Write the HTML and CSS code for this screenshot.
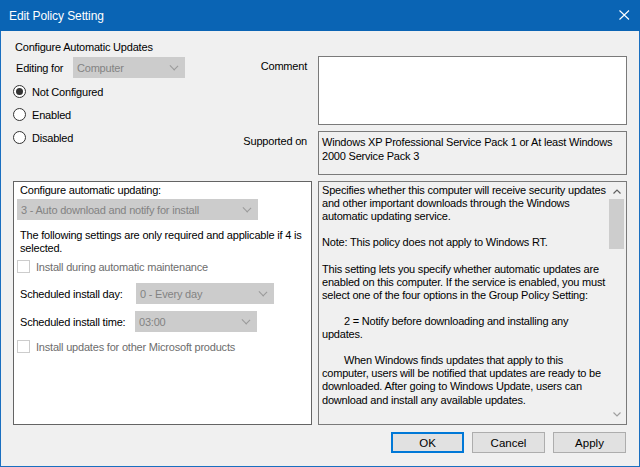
FILE: index.html
```html
<!DOCTYPE html>
<html>
<head>
<meta charset="utf-8">
<link rel="stylesheet" href="styles.css">
</head>
<body>
<div class="window">
  <div class="titlebar">
    <span class="title">Edit Policy Setting</span>
    <svg class="close" width="11" height="10" viewBox="0 0 11 10"><path d="M0.5 0.5 L10 9.5 M10 0.5 L0.5 9.5" stroke="#fff" stroke-width="1.1" fill="none"/></svg>
  </div>
  <div class="body">
    <div class="top">
      <div class="topleft">
        <div class="heading">Configure Automatic Updates</div>
        <div class="editing">
          <span class="editlabel">Editing for</span>
          <div class="combo combo-edit"><span>Computer</span><i class="chev"></i></div>
        </div>
        <div class="radios">
          <label class="radio"><span class="circle checked"></span>Not Configured</label>
          <label class="radio"><span class="circle"></span>Enabled</label>
          <label class="radio"><span class="circle"></span>Disabled</label>
        </div>
      </div>
      <div class="topright">
        <div class="flabel flabel-comment">Comment</div>
        <div class="box comment"></div>
        <div class="flabel flabel-supported">Supported on</div>
        <div class="box supported">Windows XP Professional Service Pack 1 or At least Windows 2000 Service Pack 3</div>
      </div>
    </div>
    <div class="panels">
      <div class="options">
        <div class="optlabel">Configure automatic updating:</div>
        <div class="combo combo-mode"><span>3 - Auto download and notify for install</span><i class="chev"></i></div>
        <div class="note">The following settings are only required and applicable if 4 is selected.</div>
        <label class="check check1"><span class="cbox"></span>Install during automatic maintenance</label>
        <div class="sched sched-day">
          <span class="schedlabel">Scheduled install day:</span>
          <div class="combo combo-day"><span>0 - Every day</span><i class="chev"></i></div>
        </div>
        <div class="sched sched-time">
          <span class="schedlabel">Scheduled install time:</span>
          <div class="combo combo-time"><span>03:00</span><i class="chev"></i></div>
        </div>
        <label class="check check2"><span class="cbox"></span>Install updates for other Microsoft products</label>
      </div>
      <div class="help">
        <div class="helptext">
          <p>Specifies whether this computer will receive security updates and other important downloads through the Windows automatic updating service.</p>
          <p>Note: This policy does not apply to Windows RT.</p>
          <p>This setting lets you specify whether automatic updates are enabled on this computer. If the service is enabled, you must select one of the four options in the Group Policy Setting:</p>
          <p><span class="tab"></span>2 = Notify before downloading and installing any updates.</p>
          <p><span class="tab"></span>When Windows finds updates that apply to this computer, users will be notified that updates are ready to be downloaded. After going to Windows Update, users can download and install any available updates.</p>
        </div>
        <div class="scrollbar">
          <svg class="arrow" width="8" height="5" viewBox="0 0 8 5"><path d="M0.5 4.5 L4 1 L7.5 4.5" stroke="#606060" stroke-width="1.2" fill="none"/></svg>
          <div class="track"><div class="thumb"></div></div>
          <svg class="arrow" width="8" height="5" viewBox="0 0 8 5"><path d="M0.5 0.5 L4 4 L7.5 0.5" stroke="#a0a0a0" stroke-width="1.2" fill="none"/></svg>
        </div>
      </div>
    </div>
    <div class="buttons">
      <button class="btn default">OK</button>
      <button class="btn">Cancel</button>
      <button class="btn">Apply</button>
    </div>
  </div>
</div>
</body>
</html>
```
FILE: styles.css
```css
* { box-sizing: border-box; }
html, body { margin: 0; padding: 0; }
body {
  width: 640px;
  height: 467px;
  font-family: "Liberation Sans", Arial, sans-serif;
  font-size: 11px;
  letter-spacing: -0.2px;
  color: #000;
  background: #f0f0f0;
  overflow: hidden;
}
.window {
  width: 640px;
  height: 467px;
  display: flex;
  flex-direction: column;
}
.titlebar {
  height: 31px;
  background: #0a64b4;
  color: #fff;
  display: flex;
  align-items: center;
  justify-content: space-between;
  padding: 0 10px 0 9px;
  flex: none;
}
.title { font-size: 12px; letter-spacing: -0.1px; }
.close { display: block; margin-top: -1px; }
.body {
  flex: 1;
  border: 1px solid #1a6fc0;
  border-top: none;
  background: #f0f0f0;
  padding: 0 12px 0 12px;
  display: flex;
  flex-direction: column;
}
.top {
  height: 150px;
  display: flex;
  flex: none;
}
.topleft {
  width: 220px;
  display: flex;
  flex-direction: column;
}
.heading {
  margin-top: 9px;
  margin-left: 2px;
  line-height: 14px;
  height: 14px;
}
.editing {
  margin-top: 3px;
  display: flex;
  align-items: center;
  height: 21px;
  margin-left: 3px;
}
.editlabel { width: 57px; }
.combo {
  height: 21px;
  background: #cccccc;
  border: 1px solid #cccccc;
  color: #838383;
  display: flex;
  align-items: center;
  justify-content: space-between;
  padding: 0 7px 0 3px;
}
.combo-edit { width: 112px; }
.chev {
  width: 6px;
  height: 6px;
  border-right: 1px solid #9a9a9a;
  border-bottom: 1px solid #9a9a9a;
  transform: rotate(45deg) scaleX(1.1);
  margin-top: -4px;
}
.radios {
  margin-top: 2px;
  display: flex;
  flex-direction: column;
}
.radio {
  height: 23px;
  display: flex;
  align-items: center;
  gap: 6px;
}
.circle {
  width: 13px;
  height: 13px;
  border-radius: 50%;
  border: 1px solid #333;
  background: #fff;
  display: flex;
  align-items: center;
  justify-content: center;
}
.circle.checked::after {
  content: "";
  width: 7px;
  height: 7px;
  border-radius: 50%;
  background: #333;
}
.topright {
  flex: 1;
  display: grid;
  grid-template-columns: 1fr 309px;
  grid-template-rows: 69px 44px;
  column-gap: 11px;
  row-gap: 6px;
  margin-top: 25px;
  align-content: start;
}
.flabel {
  text-align: right;
  padding-top: 4px;
}
.box {
  border: 1px solid #7a7a7a;
}
.comment { background: #fff; }
.supported {
  background: #f0f0f0;
  padding: 3px 3px 0 3px;
  line-height: 14px;
}
.panels {
  height: 244px;
  display: flex;
  gap: 6px;
  flex: none;
}
.options {
  width: 299px;
  background: #fff;
  border: 1px solid #646464;
  padding: 1px 0 0 3px;
  display: flex;
  flex-direction: column;
}
.optlabel {
  line-height: 14px;
  padding-left: 3px;
}
.combo-mode { width: 241px; margin-top: 2px; }
.note {
  margin-top: 9px;
  line-height: 13px;
  padding-left: 3px;
  padding-right: 4px;
}
.check {
  display: flex;
  align-items: center;
  gap: 6px;
  color: #6d6d6d;
  height: 13px;
}
.check1 { margin-top: 5px; }
.check2 { margin-top: 8px; }
.cbox {
  width: 13px;
  height: 13px;
  border: 1px solid #cccccc;
  background: #fff;
  flex: none;
}
.sched {
  display: flex;
  align-items: center;
  height: 21px;
}
.sched-day { margin-top: 10px; }
.sched-time { margin-top: 7px; }
.schedlabel { padding-left: 3px; }
.sched-day .schedlabel { width: 119px; }
.sched-time .schedlabel { width: 118px; }
.combo-day { width: 138px; }
.combo-time { width: 122px; }
.help {
  width: 309px;
  background: #f0f0f0;
  border: 1px solid #7a7a7a;
  display: flex;
}
.helptext {
  flex: 1;
  padding: 2px 0 0 3px;
  line-height: 13.1px;
  overflow: hidden;
}
.helptext p { margin: 0 0 13.1px 0; }
.tab { display: inline-block; width: 22px; }
.scrollbar {
  width: 17px;
  margin-right: 1px;
  display: flex;
  flex-direction: column;
  align-items: center;
}
.arrow { display: block; margin: 7px 0 5px; }
.scrollbar .arrow:last-child { margin: 4px 0 7px; }
.track {
  flex: 1;
  width: 15px;
}
.thumb {
  width: 15px;
  height: 50px;
  background: #cdcdcd;
}
.buttons {
  margin-top: 7px;
  display: flex;
  justify-content: flex-end;
  gap: 8px;
  padding-right: 1px;
}
.btn {
  width: 73px;
  height: 21px;
  background: #e1e1e1;
  border: 1px solid #adadad;
  font-family: "Liberation Sans", Arial, sans-serif;
  font-size: 11.5px;
  color: #000;
  padding: 0;
}
.btn.default { border: 2px solid #0078d7; }
```
